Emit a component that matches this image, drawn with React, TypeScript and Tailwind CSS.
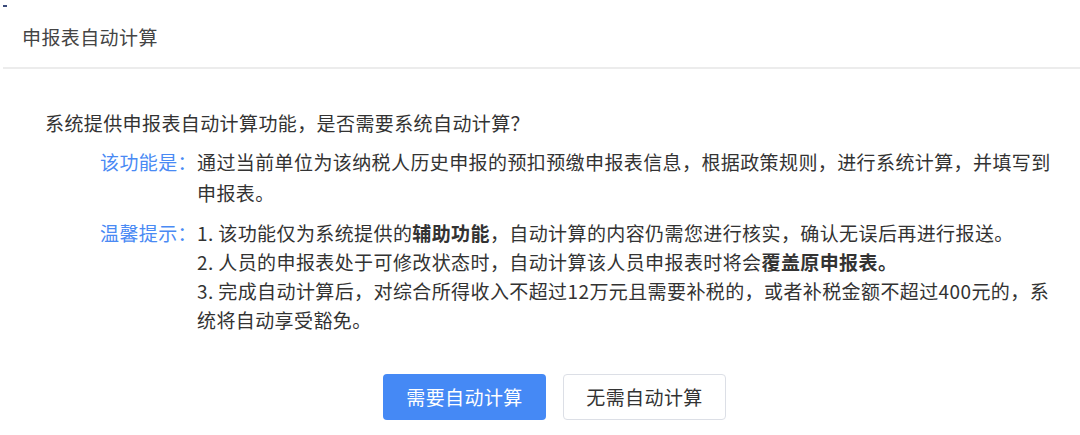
import React from "react";

const font = {
  fontFamily: '"Noto Sans CJK SC", sans-serif',
};

export default function App() {
  return (
    <div
      lang="zh-CN"
      className="relative w-[1080px] h-[435px] bg-white text-[#333] overflow-hidden tracking-[0.4px]"
      style={font}
    >
      <div className="absolute left-[3px] top-[5px] w-[4px] h-[2px] bg-[#3a4a7a]" />
      <div className="h-[69px] border-b-2 border-[#ececec] ml-[3px] pl-[19px] pt-[24px]">
        <div className="text-[19px] leading-[26px] text-[#444]">申报表自动计算</div>
      </div>
      <div className="pl-[45px] pt-[39px] text-[19px]">
        <div className="leading-[29px]">系统提供申报表自动计算功能，是否需要系统自动计算？</div>
        <div className="flex pl-[55px] mt-[9px] leading-[31px]">
          <div className="shrink-0 text-[#4a8af4]">该功能是：</div>
          <div className="w-[860px]">
            通过当前单位为该纳税人历史申报的预扣预缴申报表信息，根据政策规则，进行系统计算，并填写到申报表。
          </div>
        </div>
        <div className="flex pl-[55px] mt-[10px] leading-[29px]">
          <div className="shrink-0 text-[#4a8af4]">温馨提示：</div>
          <div className="w-[860px]">
            <div>
              1. 该功能仅为系统提供的<span className="font-bold">辅助功能</span>，自动计算的内容仍需您进行核实，确认无误后再进行报送。
            </div>
            <div>
              2. 人员的申报表处于可修改状态时，自动计算该人员申报表时将会<span className="font-bold">覆盖原申报表。</span>
            </div>
            <div>
              3. 完成自动计算后，对综合所得收入不超过12万元且需要补税的，或者补税金额不超过400元的，系统将自动享受豁免。
            </div>
          </div>
        </div>
      </div>
      <div className="flex gap-[17px] pl-[383px] mt-[40px]">
        <button className="w-[163px] h-[46px] rounded-[4px] bg-[#4589f5] text-white text-[19px]">
          需要自动计算
        </button>
        <button className="w-[163px] h-[46px] rounded-[4px] bg-white border border-[#dcdfe6] text-[#333] text-[19px]">
          无需自动计算
        </button>
      </div>
    </div>
  );
}
